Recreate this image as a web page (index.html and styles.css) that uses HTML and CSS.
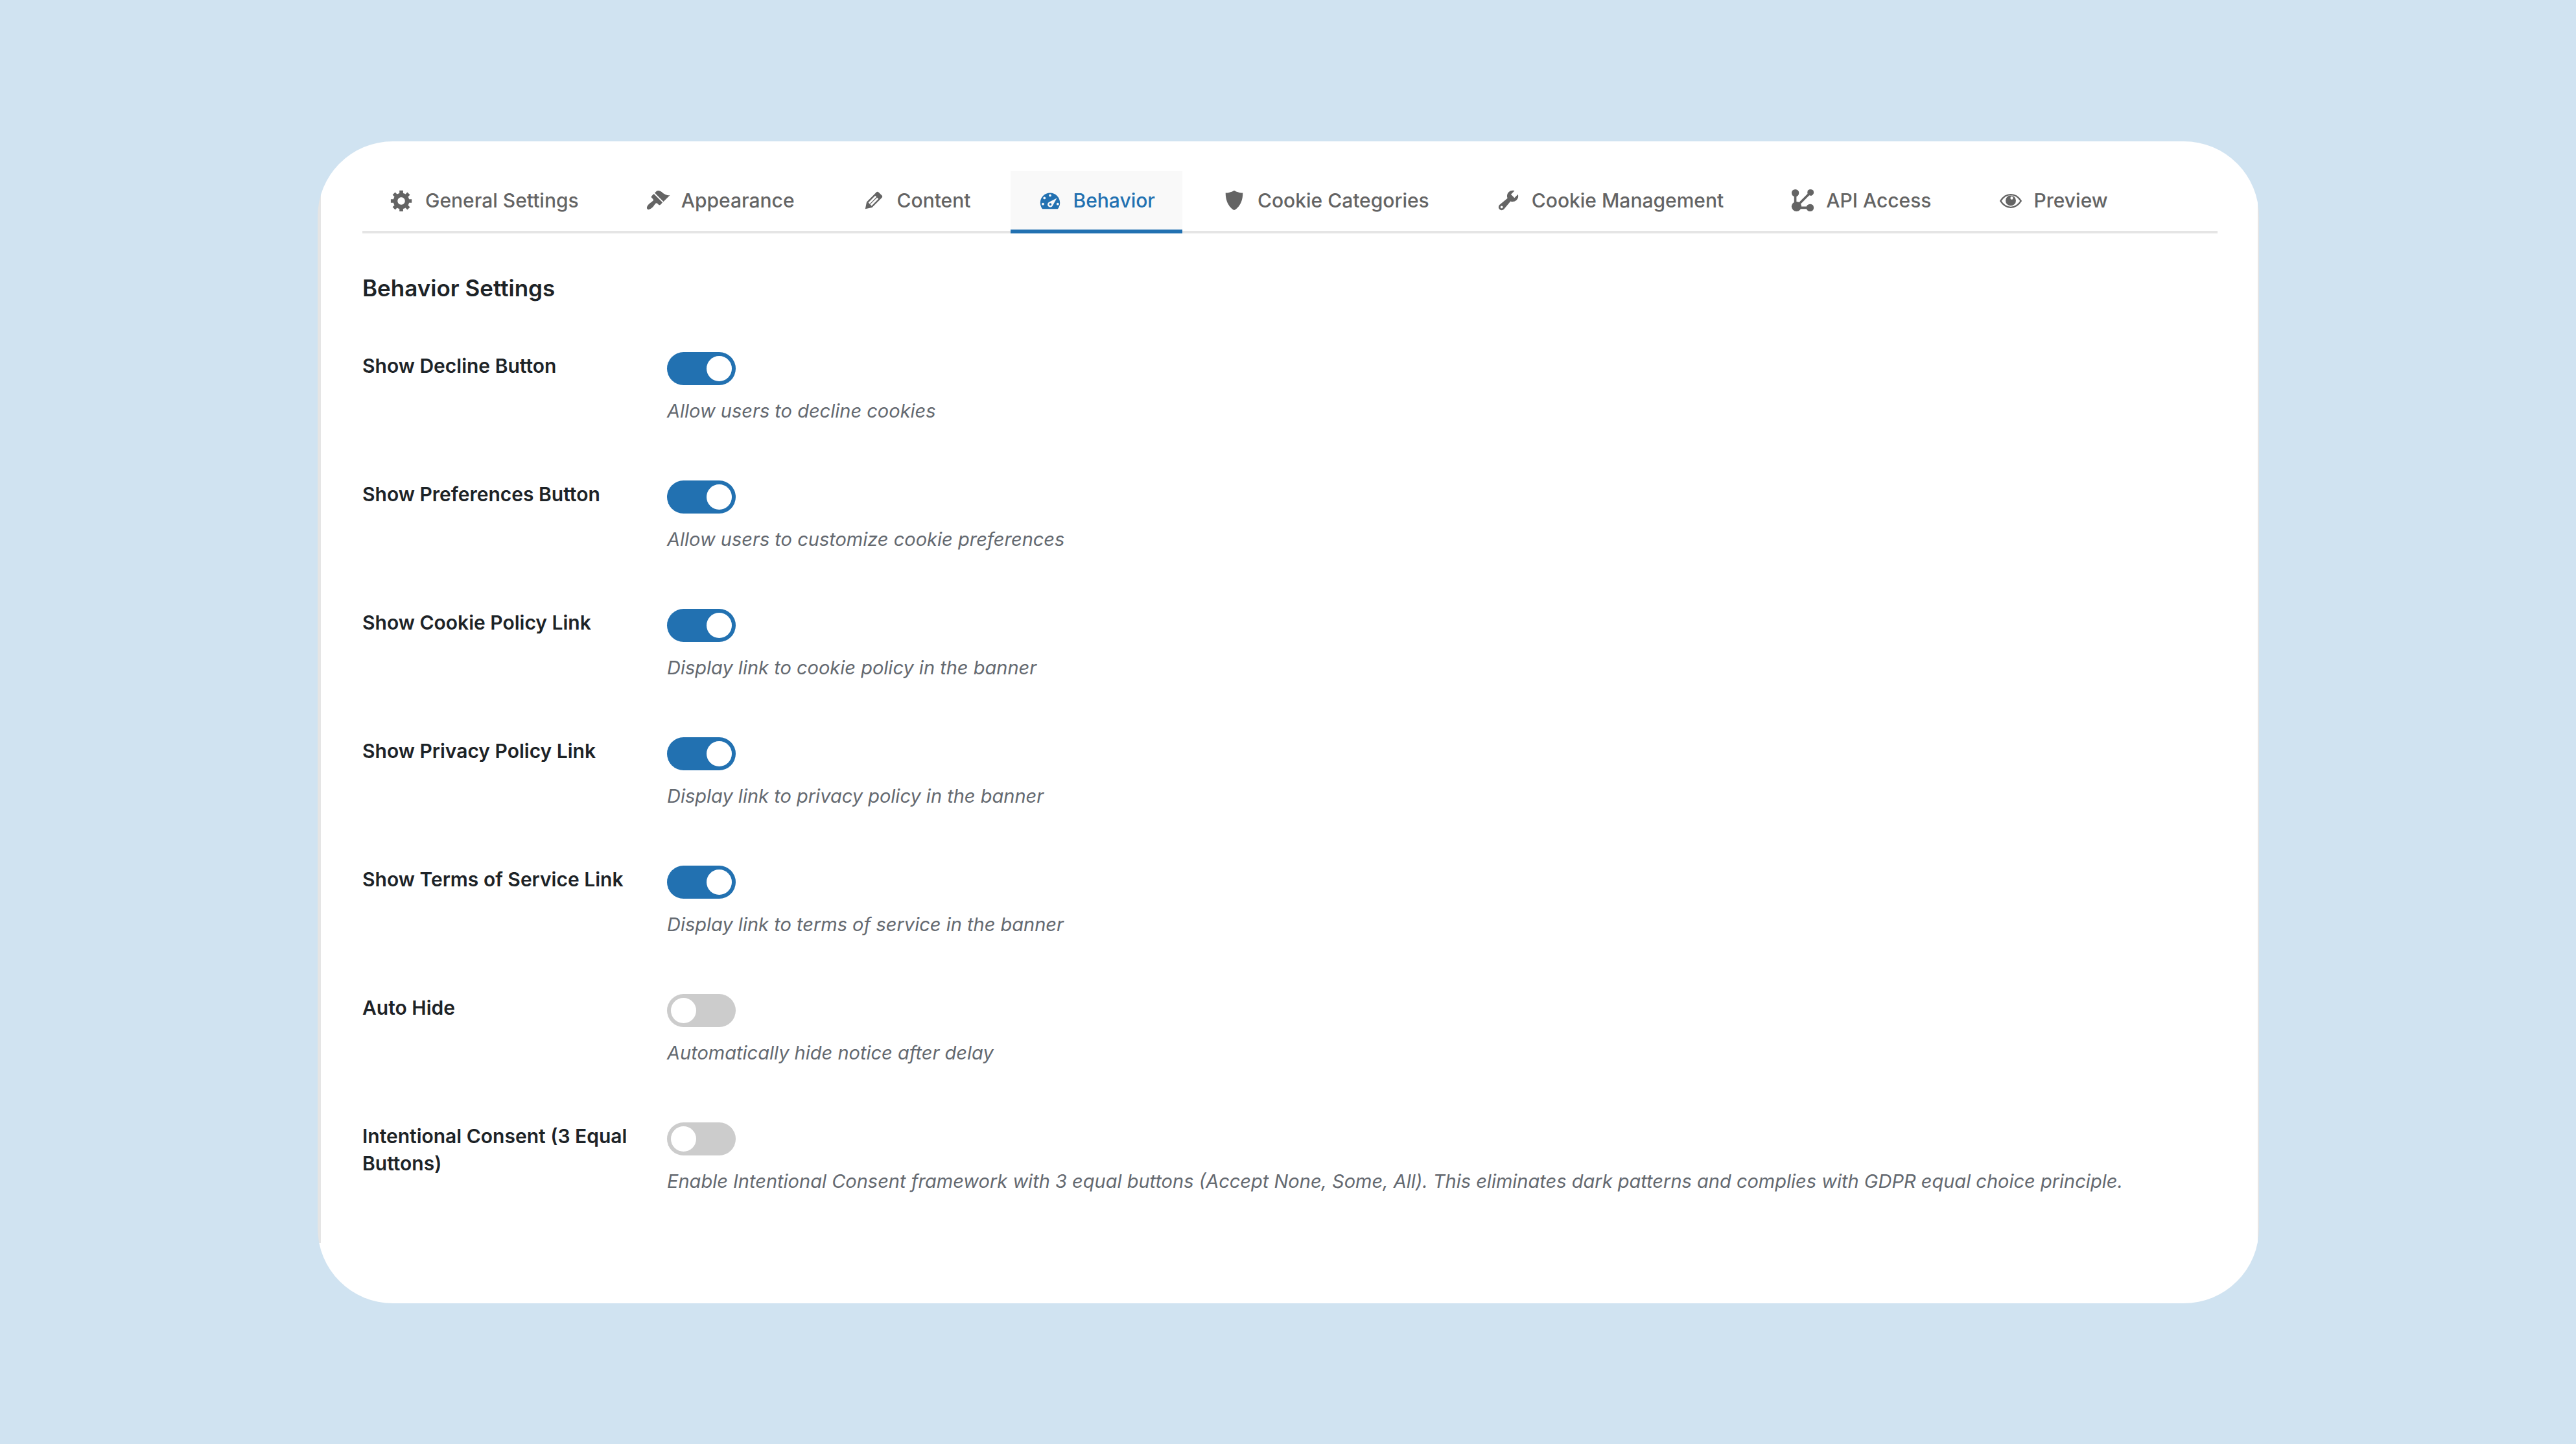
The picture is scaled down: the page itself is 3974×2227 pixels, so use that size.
FILE: index.html
```html
<!DOCTYPE html>
<html lang="en">
<head>
<meta charset="utf-8">
<meta name="viewport" content="width=device-width, initial-scale=1">
<title>Behavior Settings</title>
<link rel="stylesheet" href="styles.css">
</head>
<body>
<main class="card">
  <nav class="tabs" aria-label="Settings sections">
    <a class="tab" href="#general"><svg class="icon" viewBox="0 0 20 20" aria-hidden="true"><path d="M18 12h-2.18c-.17.7-.44 1.35-.81 1.93l1.54 1.54-2.1 2.1-1.54-1.54c-.58.36-1.23.63-1.91.79V19H8v-2.18c-.68-.16-1.33-.43-1.91-.79l-1.54 1.54-2.12-2.12 1.54-1.54c-.36-.58-.63-1.23-.79-1.91H1V9.03h2.17c.16-.7.44-1.35.8-1.94L2.43 5.55l2.1-2.1 1.54 1.54c.58-.37 1.24-.64 1.93-.81V2h3v2.18c.68.16 1.33.43 1.91.79l1.54-1.54 2.12 2.12-1.54 1.54c.36.59.64 1.24.8 1.94H18V12zm-8.5 1.5c1.66 0 3-1.34 3-3s-1.34-3-3-3-3 1.34-3 3 1.34 3 3 3z"/></svg>General Settings</a>
    <a class="tab" href="#appearance"><svg class="icon" viewBox="0 0 20 20" aria-hidden="true"><path d="M14.48 11.06L7.41 3.99l1.5-1.5c.5-.56 2.3-.47 3.51.32 1.21.8 1.43 1.28 2.91 2.1 1.18.64 2.45 1.26 4.45.85zm-.71.71L6.7 4.7 4.93 6.47c-.39.39-.39 1.02 0 1.41l1.06 1.06c.39.39.39 1.03 0 1.42-.6.6-1.43 1.11-2.21 1.69-.35.26-.7.53-1.01.84C1.43 14.23.4 16.08 1.4 17.07c.99 1 2.84-.03 4.18-1.36.31-.31.58-.66.85-1.02.57-.78 1.08-1.61 1.69-2.21.39-.39 1.02-.39 1.41 0l1.06 1.06c.39.39 1.02.39 1.41 0z"/></svg>Appearance</a>
    <a class="tab" href="#content"><svg class="icon" viewBox="0 0 20 20" aria-hidden="true"><path d="M13.89 3.39l2.71 2.72c.46.46.42 1.24.03 1.64l-8.01 8.02-5.56 1.16 1.16-5.58s7.6-7.63 7.99-8.03c.39-.39 1.22-.39 1.68.07zm-2.73 2.79l-5.59 5.61 1.11 1.11 5.54-5.65zm-2.97 8.23l5.58-5.6-1.07-1.08-5.59 5.6z"/></svg>Content</a>
    <a class="tab tab-active" href="#behavior" aria-current="page"><svg class="icon" viewBox="0 0 20 20" aria-hidden="true"><path fill-rule="evenodd" d="M3.76 17h12.48c1.1-1.37 1.76-3.11 1.76-5 0-4.42-3.58-8-8-8s-8 3.58-8 8c0 1.89.66 3.63 1.76 5zM10 5a1 1 0 1 1 0 2 1 1 0 0 1 0-2zM5.4 7.100a1 1 0 1 1 0 2 1 1 0 0 1 0-2zM4.200 12a1 1 0 1 1 0 2 1 1 0 0 1 0-2zM16.200 12a1 1 0 1 1 0 2 1 1 0 0 1 0-2zM15.500 8.200L12.200 14.100A2.200 2.200 0 1 1 9.100 11.400zM10.200 12.200a1 1 0 1 0 0 2 1 1 0 0 0 0-2z"/></svg>Behavior</a>
    <a class="tab" href="#categories"><svg class="icon" viewBox="0 0 20 20" aria-hidden="true"><path d="M10 2s3 2 7 2c0 11-7 14-7 14S3 15 3 4c4 0 7-2 7-2z"/></svg>Cookie Categories</a>
    <a class="tab" href="#management"><svg class="icon" viewBox="0 0 20 20" aria-hidden="true"><path d="M16.68 9.77c-1.34 1.34-3.3 1.67-4.95.99l-5.41 6.52c-.99.99-2.59.99-3.58 0s-.99-2.59 0-3.57l6.52-5.42c-.68-1.65-.35-3.61.99-4.95 1.28-1.28 3.12-1.62 4.72-1.06l-2.89 2.89 2.82 2.82 2.86-2.87c.53 1.58.18 3.39-1.08 4.65zM3.81 16.21c.4.39 1.04.39 1.43 0 .4-.4.4-1.04 0-1.43-.39-.4-1.03-.4-1.43 0-.39.39-.39 1.03 0 1.43z"/></svg>Cookie Management</a>
    <a class="tab" href="#api"><svg class="icon" viewBox="0 0 20 20" aria-hidden="true"><circle cx="4" cy="4" r="3"/><circle cx="16.400" cy="3.600" r="2.600"/><circle cx="5" cy="15" r="4"/><circle cx="16" cy="16" r="3"/><path d="M4 4V15M5 16H16M5 15L16.400 3.600" fill="none" stroke="currentColor" stroke-width="1.900"/></svg>API Access</a>
    <a class="tab" href="#preview"><svg class="icon" viewBox="0 0 20 20" aria-hidden="true"><path d="M1.700 10.500C6 3.600 14 3.600 18.300 10.500 14 17.400 6 17.400 1.700 10.500z" fill="none" stroke="currentColor" stroke-width="1.200"/><path fill-rule="evenodd" d="M10 6a4.200 4.200 0 1 1 0 8.400A4.200 4.200 0 0 1 10 6zM10.800 6.900a1.100 1.200 0 1 0 0 2.400 1.100 1.200 0 0 0 0-2.400z"/></svg>Preview</a>
  </nav>
  <form class="settings">
    <h1 class="title">Behavior Settings</h1>
    <div class="row"><label class="name" for="decline">Show Decline Button</label><div class="field"><input class="switch" type="checkbox" role="switch" id="decline" checked><p class="hint">Allow users to decline cookies</p></div></div>
    <div class="row"><label class="name" for="preferences">Show Preferences Button</label><div class="field"><input class="switch" type="checkbox" role="switch" id="preferences" checked><p class="hint">Allow users to customize cookie preferences</p></div></div>
    <div class="row"><label class="name" for="cookie-link">Show Cookie Policy Link</label><div class="field"><input class="switch" type="checkbox" role="switch" id="cookie-link" checked><p class="hint">Display link to cookie policy in the banner</p></div></div>
    <div class="row"><label class="name" for="privacy-link">Show Privacy Policy Link</label><div class="field"><input class="switch" type="checkbox" role="switch" id="privacy-link" checked><p class="hint">Display link to privacy policy in the banner</p></div></div>
    <div class="row"><label class="name" for="terms-link">Show Terms of Service Link</label><div class="field"><input class="switch" type="checkbox" role="switch" id="terms-link" checked><p class="hint">Display link to terms of service in the banner</p></div></div>
    <div class="row"><label class="name" for="auto-hide">Auto Hide</label><div class="field"><input class="switch" type="checkbox" role="switch" id="auto-hide"><p class="hint">Automatically hide notice after delay</p></div></div>
    <div class="row"><label class="name" for="intentional">Intentional Consent (3 Equal Buttons)</label><div class="field"><input class="switch" type="checkbox" role="switch" id="intentional"><p class="hint">Enable Intentional Consent framework with 3 equal buttons (Accept None, Some, All). This eliminates dark patterns and complies with GDPR equal choice principle.</p></div></div>
  </form>
</main>
</body>
</html>
```
FILE: styles.css
```css
* {
  box-sizing: border-box;
}

body {
  margin: 0;
  min-height: 100vh;
  padding: 218px 489px 217px 490px;
  background: #d0e3f1;
  color: #1d2327;
  font-family: Inter, "Liberation Sans", sans-serif;
  font-size: 30px;
}

.card {
  padding: 46px 64px 81px 69px;
  border-radius: 116px;
  background: linear-gradient(#e5e5e5, #e5e5e5) 0 82px / 5px 1617px no-repeat, linear-gradient(#e5e5e5, #e5e5e5) 100% 82px / 2px 1617px no-repeat, #fff;
}

.tabs {
  display: flex;
  gap: 19px;
  height: 96px;
  border-bottom: 4px solid #e5e5e5;
}

.tab {
  display: flex;
  align-items: center;
  gap: 17px;
  height: 96px;
  padding: 0 42px;
  border-bottom: 6px solid transparent;
  color: #646464;
  font-weight: 500;
  text-decoration: none;
  white-space: nowrap;
}

.tab-active {
  border-bottom-color: #2271b1;
  background: #f9f9f9;
  color: #2271b1;
}

.icon {
  width: 38px;
  height: 38px;
  fill: currentColor;
}

.title {
  margin: 61px 0 76px;
  font-size: 35px;
  font-weight: 600;
  line-height: 46px;
}

.row {
  display: grid;
  grid-template-columns: 470px 1fr;
  min-height: 198px;
}

.name {
  padding-right: 48px;
  font-weight: 600;
  line-height: 42px;
}

.switch {
  display: block;
  width: 106px;
  height: 51px;
  margin: 0;
  padding: 6px;
  border-radius: 26px;
  background: #ccc;
  appearance: none;
}

.switch::before {
  content: "";
  display: block;
  width: 39px;
  height: 39px;
  border-radius: 50%;
  background: #fff;
}

.switch:checked {
  background: #2271b1;
}

.switch:checked::before {
  margin-left: auto;
}

.hint {
  margin: 18px 0 0;
  color: #646970;
  font-size: 29px;
  font-style: italic;
  line-height: 44px;
}
```
